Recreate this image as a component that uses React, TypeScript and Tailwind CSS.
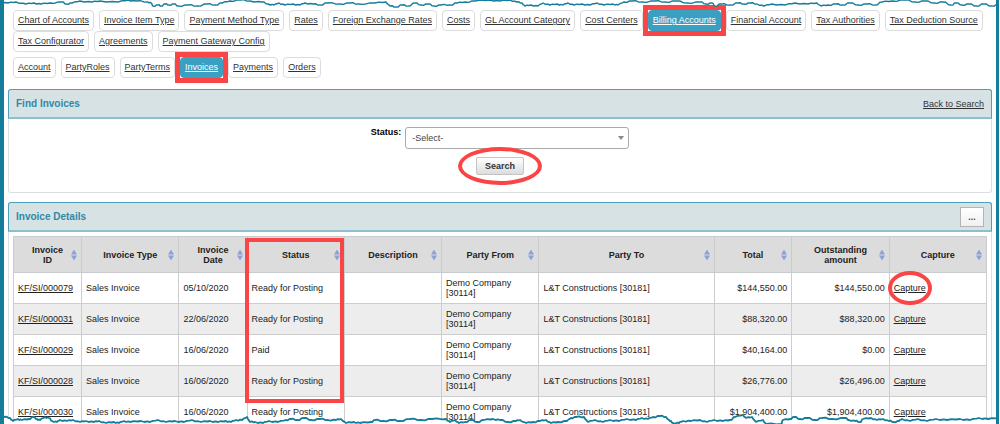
import React from 'react';

const accountTabs = [
  'Chart of Accounts', 'Invoice Item Type', 'Payment Method Type', 'Rates', 'Foreign Exchange Rates',
  'Costs', 'GL Account Category', 'Cost Centers', 'Billing Accounts', 'Financial Account',
  'Tax Authorities', 'Tax Deduction Source', 'Tax Configurator', 'Agreements', 'Payment Gateway Config',
];
const billingTabs = ['Account', 'PartyRoles', 'PartyTerms', 'Invoices', 'Payments', 'Orders'];

const columns = [
  { label: 'Invoice ID', width: 'w-[7%]' },
  { label: 'Invoice Type', width: 'w-[10%]' },
  { label: 'Invoice Date', width: 'w-[7%]' },
  { label: 'Status', width: 'w-[10%]' },
  { label: 'Description', width: 'w-[10%]' },
  { label: 'Party From', width: 'w-[10%]' },
  { label: 'Party To', width: 'w-[18%]' },
  { label: 'Total', width: 'w-[8%]' },
  { label: 'Outstanding amount', width: 'w-[10%]' },
  { label: 'Capture', width: 'w-[10%]' },
];

const invoices = [
  { id: 'KF/SI/000079', date: '05/10/2020', status: 'Ready for Posting', total: '$144,550.00', due: '$144,550.00' },
  { id: 'KF/SI/000031', date: '22/06/2020', status: 'Ready for Posting', total: '$88,320.00', due: '$88,320.00' },
  { id: 'KF/SI/000029', date: '16/06/2020', status: 'Paid', total: '$40,164.00', due: '$0.00' },
  { id: 'KF/SI/000028', date: '16/06/2020', status: 'Ready for Posting', total: '$26,776.00', due: '$26,496.00' },
  { id: 'KF/SI/000030', date: '16/06/2020', status: 'Ready for Posting', total: '$1,904,400.00', due: '$1,904,400.00' },
];

const topEdge =
  '0,2 8,3 16,2 26,4 34,3 41,4 50,3 62,2 66,4 72,3 80,1 92,2 100,1 118,2 128,0 136,1 148,2 151,3 153,6 158,5 161,6 165,4 169,5 174,4 178,6 188,5 197,6 207,4 215,5 222,3 230,1 240,0 250,1 262,2 268,4 274,5 279,3 285,5 293,4 300,5 305,3 313,4 320,5 327,3 340,4 350,3 358,4 375,3 386,2 390,6 396,7 402,5 408,6 415,3 421,5 428,4 434,6 441,5 450,5 457,3 465,2 475,1 490,0 500,1 510,0 517,2 522,3 525,6 531,5 538,6 543,3 550,5 557,4 563,5 568,3 574,5 582,4 590,5 597,3 604,5 613,4 618,5 624,2 632,1 642,2 655,1 665,2 676,1 687,3 700,2 706,4 712,3 715,6 721,4 730,5 738,3 744,4 750,3 757,4 764,6 772,4 785,5 795,3 808,4 817,3 821,6 828,5 836,4 842,5 850,3 858,5 867,4 875,5 882,2 892,1 905,0 915,2 925,1 934,3 943,2 951,5 956,3 962,5 969,4 976,6 984,4 991,6 1000,4';
const bottomEdge =
  '0,7 5,7 10,8 13,11 18,9 22,10 29,9 33,7 37,9 40,10 45,7 49,8 52,11 57,12 60,10 67,11 73,10 80,12 86,11 94,12 99,11 106,13 114,12 119,13 124,11 130,12 141,11 150,12 158,10 166,12 175,11 184,12 192,10 201,12 210,11 218,12 226,11 231,12 236,10 242,10 247,7 250,12 255,12 263,13 269,11 278,12 286,10 291,9 297,10 304,8 311,10 320,9 328,10 336,10 341,9 346,13 354,12 360,13 371,12 375,10 383,11 393,10 399,11 410,9 421,10 432,9 446,9 450,12 455,10 459,13 465,12 471,10 477,12 484,10 493,9 500,10 508,12 516,11 520,10 526,13 533,12 540,11 546,10 551,13 558,12 567,11 571,8 576,7 584,7 588,12 595,10 603,12 610,10 619,11 627,9 636,10 642,8 648,9 653,7 660,6 666,7 670,11 673,13 679,13 683,11 691,11 700,10 707,12 714,10 723,11 730,10 735,7 743,5 746,8 752,7 756,12 763,10 766,14 781,14 783,10 790,9 794,7 800,9 807,8 815,10 822,8 832,9 845,8 849,10 855,11 860,12 863,9 871,8 877,10 883,9 889,11 894,12 899,11 902,9 910,11 918,9 927,11 936,9 947,10 960,9 970,10 979,8 988,9 1000,8';

// Adds small alternating nicks between the points so the edge reads as torn paper.
function roughen(points: string) {
  const pts = points.split(' ').map((p) => p.split(',').map(Number));
  return pts
    .flatMap(([x, y], i) => {
      const next = pts[i + 1];
      if (!next) return [`${x},${y}`];
      const dx = next[0] - x;
      const dy = next[1] - y;
      const nick = i % 2 === 0 ? 0.7 : -0.6;
      return [`${x},${y}`, `${x + dx * 0.35},${y + dy * 0.3 + nick}`, `${x + dx * 0.7},${y + dy * 0.8 - nick / 2}`];
    })
    .join(' ');
}

function TornEdge({ points, side }: { points: string; side: 'top' | 'bottom' }) {
  const far = side === 'top' ? '1000,-2 0,-2' : '1000,20 0,20';
  const line = roughen(points);
  return (
    <svg
      viewBox="0 0 1000 14"
      preserveAspectRatio="none"
      aria-hidden="true"
      className={
        side === 'top'
          ? 'pointer-events-none absolute -inset-x-1 top-0 h-[14px] w-[calc(100%+8px)]'
          : 'pointer-events-none absolute -inset-x-1 bottom-0 h-[14px] w-[calc(100%+8px)]'
      }
    >
      <polygon points={`${line} ${far}`} fill="#fff" />
      <polyline
        points={line}
        fill="none"
        stroke="#147d9c"
        strokeWidth={side === 'top' ? 1.4 : 1.8}
        strokeLinejoin="round"
      />
    </svg>
  );
}

function Tabs({ label, items, active }: { label: string; items: string[]; active: string }) {
  return (
    <nav aria-label={label} className="flex flex-wrap gap-x-[5px]">
      {items.map((item) => (
        <div key={item} className="relative">
          <a
            href="#"
            className={
              item === active
                ? 'block rounded-[4px] border border-[#3a9fc0] bg-[#3a9fc0] px-1 pt-1 pb-[5px] text-white underline'
                : 'block rounded-[4px] border border-[#dcdcdc] bg-white px-1 pt-1 pb-[5px] text-[#333] underline'
            }
          >
            {item}
          </a>
          {item === active && (
            <span className="pointer-events-none absolute -inset-x-[5px] -inset-y-[5px] border-[5px] border-[#f94545]" />
          )}
        </div>
      ))}
    </nav>
  );
}

function Panel({ title, action, children }: { title: string; action: React.ReactNode; children: React.ReactNode }) {
  return (
    <section className="rounded-[3px] border border-t-0 border-[#dadfe2]">
      <header className="-mx-px flex h-[30px] items-center justify-between rounded-t-[3px] border border-b-2 border-[#4d9fba] border-b-[#8dc0cc] bg-[#d7e2e4] pr-[7px] pl-[7px]">
        <h2 className="text-[10px] font-bold text-[#3189a8]">{title}</h2>
        {action}
      </header>
      {children}
    </section>
  );
}

function SortIcon() {
  return (
    <svg viewBox="0 0 6 11" aria-hidden="true" className="absolute top-1/2 right-1 h-[11px] w-[6px] -translate-y-1/2">
      <path d="M3 0 6 5H0ZM0 6h6L3 11Z" fill="#8ca0dc" />
    </svg>
  );
}

export default function App() {
  return (
    <div className="bg-white pr-px">
      <div className="relative h-screen overflow-hidden border-r-[3px] border-l-4 border-[#147d9c] bg-white font-['Liberation_Sans',Arial,sans-serif] text-[9px] leading-[10px] text-[#222]">
        <div className="px-1 pt-[10px]">
          <div className="mb-[11px] flex flex-col gap-[5px] pr-1 pl-[5px]">
            <Tabs label="Accounting" items={accountTabs} active="Billing Accounts" />
            <Tabs label="Billing account" items={billingTabs} active="Invoices" />
          </div>

          <Panel title="Find Invoices" action={<a href="#" className="text-[#333] underline">Back to Search</a>}>
            <form className="flex flex-col items-center gap-2 pt-2 pb-[17px]" onSubmit={(e) => e.preventDefault()}>
              <div className="flex gap-1">
                <label htmlFor="status" className="font-bold text-black">Status:</label>
                <div className="relative w-56">
                  <select
                    id="status"
                    className="block h-[22px] w-full appearance-none rounded-[3px] border border-[#aaa] bg-white px-[6px] text-[#444]"
                  >
                    <option>-Select-</option>
                  </select>
                  <svg viewBox="0 0 6 4" aria-hidden="true" className="pointer-events-none absolute top-[9px] right-[5px] h-1 w-[6px]">
                    <path d="M0 0h6L3 4Z" fill="#888" />
                  </svg>
                </div>
              </div>
              <div className="relative">
                <button
                  type="submit"
                  className="block h-[18px] rounded-[2px] border border-[#c4c4c4] bg-linear-to-b from-white to-[#dcdcdc] px-2 font-bold text-[#333]"
                >
                  Search
                </button>
                <span className="pointer-events-none absolute -inset-x-[18px] -inset-y-[10px] rounded-[50%] border-4 border-[#f94545]" />
              </div>
            </form>
          </Panel>

          <div className="mt-[9px]">
            <Panel
              title="Invoice Details"
              action={
                <button
                  type="button"
                  aria-label="More actions"
                  className="h-5 w-6 border border-[#b4b4b4] bg-linear-to-b from-white to-[#f0f0f0] font-bold text-[#444]"
                >
                  ...
                </button>
              }
            >
              <div className="px-1 pt-1 pb-1">
                <table className="w-full table-fixed border-collapse">
                  <thead>
                    <tr className="h-9">
                      {columns.map((c) => (
                        <th key={c.label} className={`${c.width} relative border border-[#c8cccf] bg-[#dcdcdc] px-4 text-center align-middle font-bold`}>
                          {c.label}
                          <SortIcon />
                          {c.label === 'Status' && (
                            <span className="pointer-events-none absolute top-px right-0 -left-[3px] z-10 h-[165px] border-4 border-[#f94545]" />
                          )}
                        </th>
                      ))}
                    </tr>
                  </thead>
                  <tbody className="[&_td]:border [&_td]:border-[#cdcdcd] [&_td]:px-1 [&_td]:py-[5px]">
                    {invoices.map((row, i) => (
                      <tr key={row.id} className="h-[31px] bg-white even:bg-[#ededed]">
                        <td><a href="#" className="underline">{row.id}</a></td>
                        <td>Sales Invoice</td>
                        <td>{row.date}</td>
                        <td>{row.status}</td>
                        <td />
                        <td>Demo Company [30114]</td>
                        <td>L&amp;T Constructions [30181]</td>
                        <td className="text-right">{row.total}</td>
                        <td className="text-right">{row.due}</td>
                        <td>
                          <span className="relative">
                            <a href="#" className="underline">Capture</a>
                            {i === 0 && (
                              <span className="pointer-events-none absolute -inset-x-[6px] -inset-y-3 rounded-[50%] border-4 border-[#f94545]" />
                            )}
                          </span>
                        </td>
                      </tr>
                    ))}
                  </tbody>
                </table>
              </div>
            </Panel>
          </div>
        </div>
        <TornEdge points={topEdge} side="top" />
        <TornEdge points={bottomEdge} side="bottom" />
      </div>
    </div>
  );
}
